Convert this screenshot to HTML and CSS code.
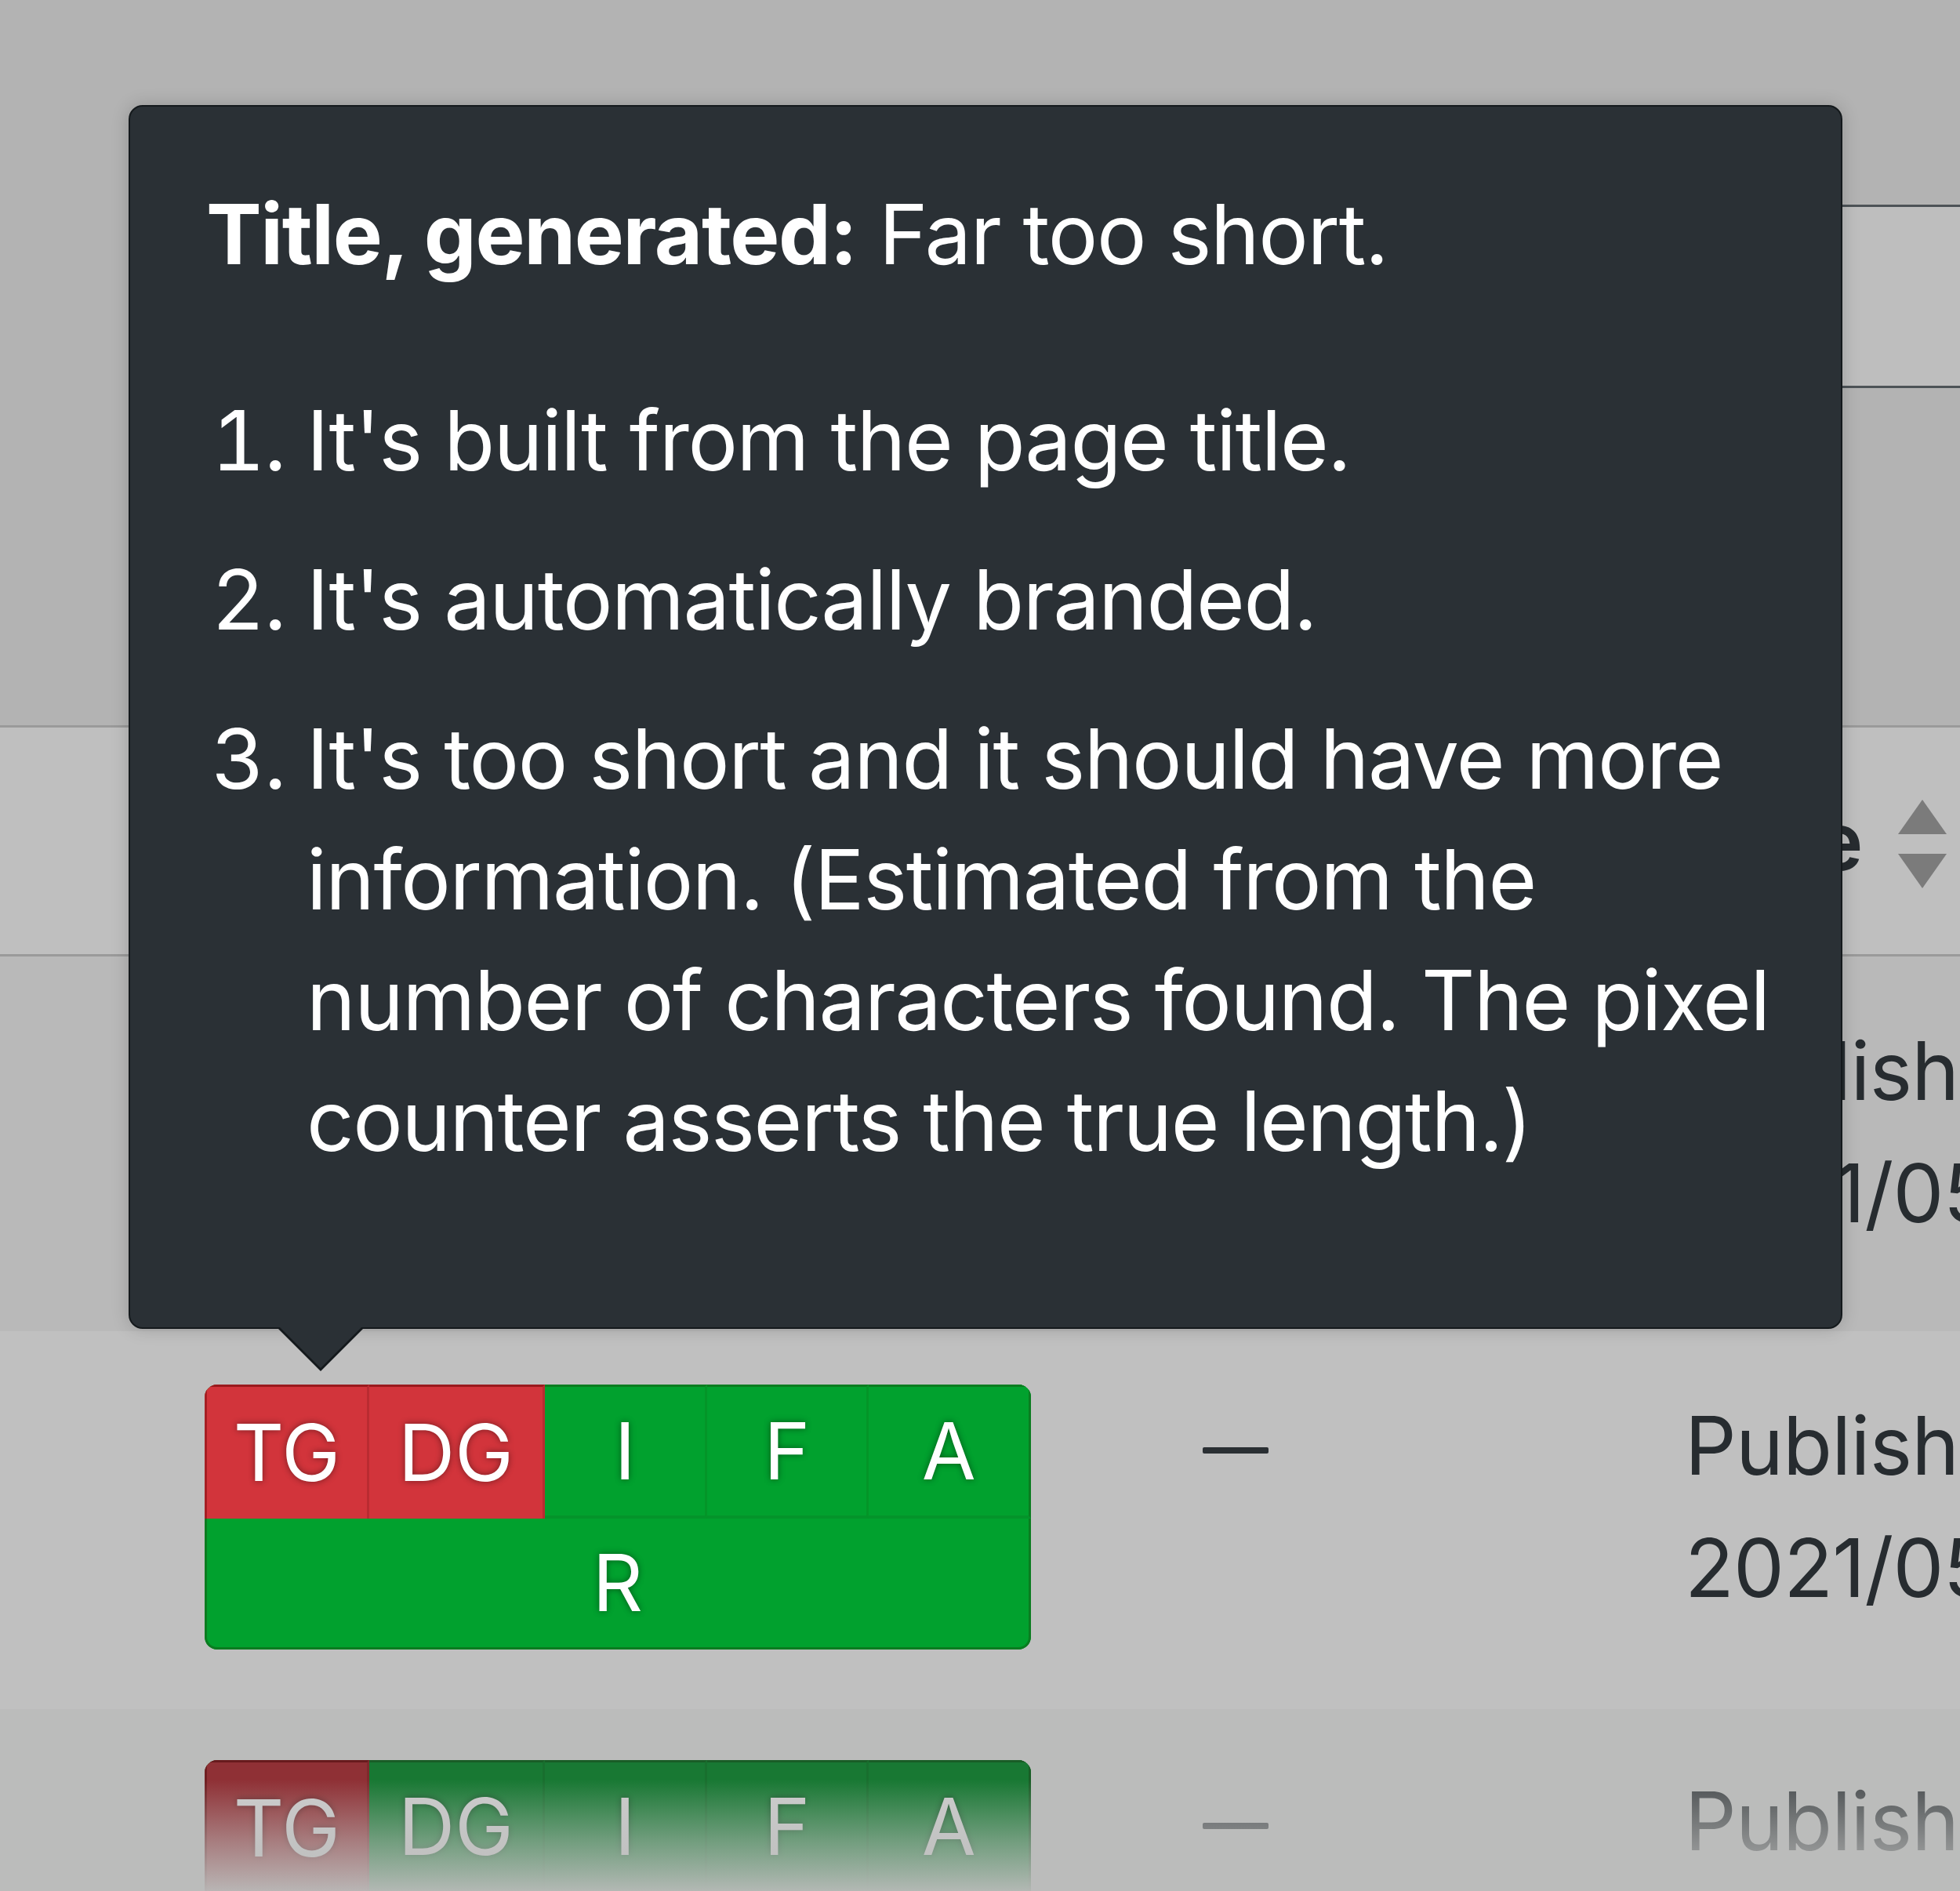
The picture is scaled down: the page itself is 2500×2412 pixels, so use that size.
FILE: index.html
```html
<!DOCTYPE html>
<html lang="en">
<head>
<meta charset="utf-8">
<title>Title, generated – tooltip</title>
<link rel="stylesheet" href="styles.css">
</head>
<body>
<div class="page">
  <div class="top">
    <div class="top-spacer"></div>
    <div class="search-box"></div>
  </div>

  <div class="row head">
    <div class="col col-badge">SEO</div>
    <div class="col col-dash">Redirect</div>
    <div class="col col-date">Date</div>
    <div class="sorter"><span class="tri up"></span><span class="tri down"></span></div>
  </div>

  <div class="row r1">
    <div class="col col-badge">
      <div class="badges">
        <span class="cell bad">TG</span><span class="cell bad wide">DG</span><span class="cell good">I</span><span class="cell good">F</span><span class="cell good last">A</span><span class="cell good full">R</span>
      </div>
    </div>
    <div class="col col-dash"><span class="dash"></span></div>
    <div class="col col-date">Published<br>2021/05/18</div>
  </div>

  <div class="row r2">
    <div class="col col-badge">
      <div class="badges">
        <span class="cell bad">TG</span><span class="cell bad wide">DG</span><span class="cell good">I</span><span class="cell good">F</span><span class="cell good last">A</span><span class="cell good full">R</span>
      </div>
    </div>
    <div class="col col-dash"><span class="dash"></span></div>
    <div class="col col-date">Published<br>2021/05/18</div>
  </div>

  <div class="row r3">
    <div class="col col-badge">
      <div class="badges">
        <span class="cell bad">TG</span><span class="cell good wide">DG</span><span class="cell good">I</span><span class="cell good">F</span><span class="cell good last">A</span><span class="cell good full">R</span>
      </div>
    </div>
    <div class="col col-dash"><span class="dash"></span></div>
    <div class="col col-date">Published<br>2021/05/18</div>
    <div class="fade"></div>
  </div>

  <div class="tooltip">
    <p class="tip-title"><strong>Title, generated:</strong> Far too short.</p>
    <ol class="tip-list">
      <li>It's built from the page title.</li>
      <li>It's automatically branded.</li>
      <li>It's too short and it should have more information. (Estimated from the number of characters found. The pixel counter asserts the true length.)</li>
    </ol>
  </div>
</div>
</body>
</html>
```

FILE: styles.css
```css
html, body {
  margin: 0;
  padding: 0;
  width: 2500px;
  height: 2412px;
  overflow: hidden;
  background: #b3b3b3;
}

body {
  font-family: Inter, "Noto Sans", "Liberation Sans", sans-serif;
  color: #272c30;
}

.page {
  position: relative;
  width: 2500px;
  height: 2412px;
}

/* top area with a boxed control on the right */
.top {
  height: 925px;
  display: flex;
  flex-direction: column;
  align-items: flex-end;
}
.top-spacer {
  height: 261px;
}
.search-box {
  width: 700px;
  height: 228px;
  background: #bebebe;
  border-top: 3px solid #4d5357;
  border-bottom: 3px solid #4d5357;
}

/* table rows */
.row {
  position: relative;
  display: flex;
  align-items: flex-start;
  font-size: 103px;
  line-height: 156px;
  letter-spacing: -0.8px;
}
.col-badge {
  margin-left: 261px;
  width: 1054px;
  flex: none;
}
.col-dash {
  margin-left: 219px;
  width: 615px;
  flex: none;
}
.col-date {
  flex: none;
  white-space: nowrap;
}

.head {
  height: 289px;
  background: #bfbfbf;
  border-top: 3px solid #9a9a9a;
  border-bottom: 3px solid #9a9a9a;
  align-items: center;
  font-weight: 600;
}
.head .col-date {
  width: 225px;
}
.sorter {
  margin-left: auto;
  margin-right: 17px;
  display: flex;
  flex-direction: column;
  gap: 25px;
  padding-top: 8px;
}
.tri {
  width: 0;
  height: 0;
  border-left: 31px solid transparent;
  border-right: 31px solid transparent;
}
.tri.up { border-bottom: 44px solid #7b7b7b; }
.tri.down { border-top: 44px solid #7b7b7b; }

.r1 {
  height: 410px;
  padding-top: 68px;
  background: #b9b9b9;
}
.r2 {
  height: 414px;
  padding-top: 68px;
  background: #c0c0c0;
}
.r3 {
  height: 167px;
  padding-top: 65px;
  background: #bbbcbb;
  overflow: hidden;
}

.dash {
  display: block;
  width: 84px;
  height: 8px;
  margin-top: 80px;
  background: #2a2f33;
  border-radius: 2px;
}

/* status badges */
.badges {
  display: flex;
  flex-wrap: wrap;
  border-radius: 16px;
  overflow: hidden;
  background: #0a8a25;
  letter-spacing: 0;
}
.cell {
  flex: 1 1 0;
  height: 171px;
  display: flex;
  align-items: center;
  justify-content: center;
  color: #fff;
  font-size: 100px;
  font-weight: 400;
  text-shadow: 0 0 8px rgba(0, 0, 0, 0.45);
  box-sizing: border-box;
}
.cell.wide { flex-grow: 1.09; }
.cell.bad {
  background: #d2343b;
  border-top: 3px solid #9a1a1e;
  border-right: 3px solid #b92b31;
}
.cell.bad:first-child { border-left: 3px solid #a61f24; }
.cell.good {
  background: #01a12e;
  border-top: 3px solid #0b7c20;
  border-right: 3px solid #049528;
  border-bottom: 4px solid #04942a;
}
.cell.good.last { border-right: 3px solid #0b7c20; }
.cell.full {
  flex: 1 0 100%;
  height: 167px;
  border: 3px solid #0b7c20;
  border-top: none;
  border-radius: 0 0 16px 16px;
}

.r3 .badges {
  filter: saturate(0.75) brightness(0.8);
}
.r3 .col-date,
.r3 .dash {
  opacity: 0.75;
}
.fade {
  position: absolute;
  left: 0;
  right: 0;
  top: 90px;
  bottom: 0;
  background: linear-gradient(to bottom, rgba(187, 188, 187, 0) 0%, rgba(187, 188, 187, 0.55) 55%, rgba(187, 188, 187, 0.95) 100%);
}

/* tooltip */
.tooltip {
  position: absolute;
  left: 164px;
  top: 134px;
  width: 2186px;
  height: 1561px;
  box-sizing: border-box;
  padding: 86px 48px 0 97px;
  background: #2a3035;
  border: 2px solid #14191c;
  border-radius: 18px;
  box-shadow: 0 0 22px rgba(0, 0, 0, 0.18);
  color: #fff;
  font-size: 106px;
  line-height: 154px;
  letter-spacing: -1.4px;
}
.tooltip::before,
.tooltip::after {
  content: "";
  position: absolute;
  width: 0;
  height: 0;
}
.tooltip::before {
  left: 187px;
  top: 100%;
  border-left: 56px solid transparent;
  border-right: 56px solid transparent;
  border-top: 56px solid #14191c;
}
.tooltip::after {
  left: 189px;
  top: 100%;
  margin-top: -2px;
  border-left: 54px solid transparent;
  border-right: 54px solid transparent;
  border-top: 54px solid #2a3035;
}
.tip-title {
  margin: 0;
}
.tip-title strong {
  font-weight: 700;
}
.tip-list {
  margin: 109px 0 0;
  padding-left: 128px;
}
.tip-list li + li {
  margin-top: 49px;
}
```
